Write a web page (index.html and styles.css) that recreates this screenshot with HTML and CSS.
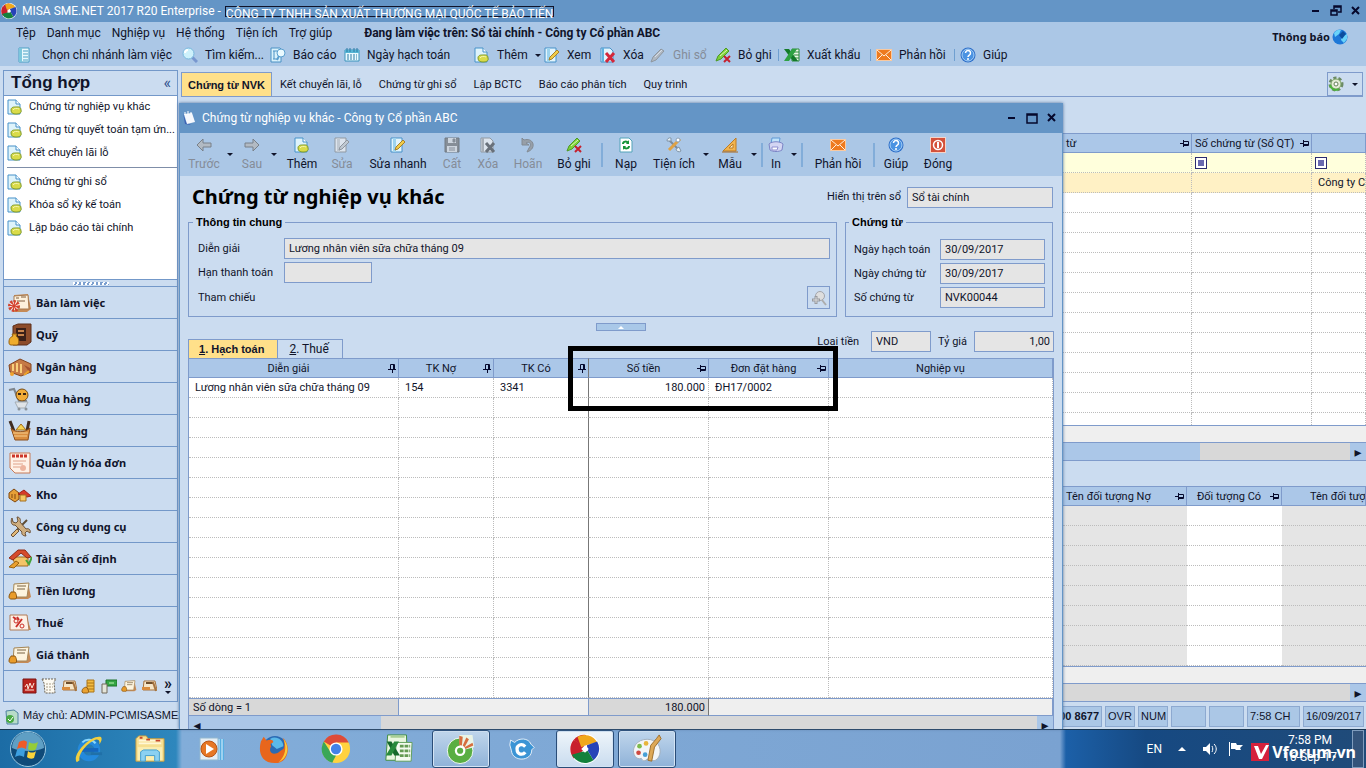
FILE: index.html
```html
<!DOCTYPE html>
<html lang="vi">
<head>
    <meta charset="UTF-8">
    <meta name="viewport" content="width=device-width, initial-scale=1.0">
    <title>MISA SME.NET 2017</title>
    <link rel="stylesheet" href="styles.css">
</head>
<body>
    <!-- icon set -->
    <svg class="defs" aria-hidden="true">
        <symbol id="misa" viewBox="0 0 32 32">
            <circle cx="16" cy="16" r="16" fill="#fff"/>
            <path d="M16 16 4 6A15.500 15.500 0 0 1 17 1z" fill="#c8202c"/><path d="M16 16 4 26A15.500 15.500 0 0 1 4 6L13 12z" fill="#c8202c"/>
            <path d="M12 14 8 3A15.500 15.500 0 0 1 29 9L17 12z" fill="#f0a81c"/>
            <path d="M18 12 29 8A15.500 15.500 0 0 1 25 28L19 18z" fill="#2743b8"/>
            <path d="M19 18 25 28A15.500 15.500 0 0 1 2 22L13 19z" fill="#13813c"/>
            <path d="M16 12l4 4-4 4-4-4z" fill="#fff"/>
        </symbol>
        <symbol id="doc-list" viewBox="0 0 16 16">
            <path d="M3 1h10v14H3z" fill="#e8f8fd" stroke="#4b9fc4"/><path d="M3 1h3v14H3z" fill="#7cc6dc"/><path d="M7 4h5M7 7h5M7 10h5M7 13h5" stroke="#4b9fc4"/>
        </symbol>
        <symbol id="search" viewBox="0 0 16 16">
            <path d="M10 10l5 5" stroke="#7897cf" stroke-width="3"/><circle cx="6.500" cy="6.500" r="5.500" fill="#cdf1fb" stroke="#78b7dd"/><path d="M3 6a3 3 0 0 1 3-3" stroke="#fff" fill="none" stroke-width="2"/>
        </symbol>
        <symbol id="report" viewBox="0 0 16 16">
            <path d="M1 1h9l1 1v13H1z" fill="#d9f1fb" stroke="#4a91c4"/><path d="M3 4h4M4 4v8M3 12h4" stroke="#4a91c4"/><circle cx="11" cy="6" r="4" fill="#eafaff" stroke="#5b9fcf"/><path d="M9 9l-2 4" stroke="#5b9fcf" stroke-width="2"/>
        </symbol>
        <symbol id="calendar" viewBox="0 0 16 16">
            <path d="M1 3h14v11H1z" fill="#e9faff" stroke="#3a93bb"/><path d="M1 3h14v3H1z" fill="#55b5d5"/><path d="M3 1v4M6 1v4M10 1v4M13 1v4" stroke="#2a7ba5"/><path d="M3 8h10M3 10h10M3 12h10" stroke="#2a7ba5" stroke-dasharray="2 1"/>
        </symbol>
        <symbol id="doc-add" viewBox="0 0 16 16">
            <path d="M1 1h8l4 4v10H1z" fill="#def3fb" stroke="#4691c9"/><path d="M9 1v4h4" fill="#fff" stroke="#4691c9"/><path d="M4 11c0-3 3-3 4-3 2 0 6-1 6 3 1 3-2 4-5 4s-5-1-5-4z" fill="#d9db49" stroke="#7f9a2a"/><path d="M6 11c1-2 4-2 6-1" stroke="#f7f6b0" fill="none"/>
        </symbol>
        <symbol id="doc-edit" viewBox="0 0 16 16">
            <path d="M1 1h11v14H1z" fill="#e2f4fc" stroke="#4691c9"/><path d="M3 1h3v14H3z" fill="#9dd3ee"/><path d="M13 3l2 2-7 7-3 1 1-3z" fill="#f1cc49" stroke="#a6802b"/>
        </symbol>
        <symbol id="doc-del" viewBox="0 0 16 16">
            <path d="M1 1h9l3 3v11H1z" fill="#e2f4fc" stroke="#4691c9"/><path d="M2 1h2v14H2z" fill="#5fb2e0"/><path d="M6 6l8 9M14 6l-8 9" stroke="#d3283b" stroke-width="3"/>
        </symbol>
        <symbol id="pen" viewBox="0 0 16 16">
            <path d="M11 2l3 2-8 9-5 2 2-5z" fill="#7cd13a" stroke="#4d9a25"/><path d="M5 10l7-7" stroke="#d8f5a9"/>
        </symbol>
        <symbol id="pen-del" viewBox="0 0 16 16">
            <path d="M11 1l3 3-8 8-5 2 2-5z" fill="#7cd13a" stroke="#4d9a25"/><path d="M5 9l7-6" stroke="#e1f9b5"/><path d="M9 9l6 6M15 9l-6 6" stroke="#c5202e" stroke-width="2"/>
        </symbol>
        <symbol id="excel" viewBox="0 0 16 16">
            <path d="M8 2h7v12H8z" fill="#edf8e9" stroke="#2a8a38"/><path d="M10 5h5M10 8h5M10 11h5" stroke="#2a8a38"/><path d="M0 2h5l9 12H9z" fill="#137a2a"/><path d="M13 2L5 14H0L8 2z" fill="#2ea143"/>
        </symbol>
        <symbol id="mail" viewBox="0 0 16 16">
            <path d="M0 2h16v12H0z" fill="#f9c9a0"/><path d="M1 3h14v10H1z" fill="#ee7a1f"/><path d="M1 3l7 6 7-6M1 13l5-5M15 13l-5-5" stroke="#fff0df" fill="none"/>
        </symbol>
        <symbol id="help" viewBox="0 0 16 16">
            <circle cx="8" cy="8" r="7.500" fill="#2d6fc9"/><circle cx="8" cy="8" r="6" fill="#4b93e2" stroke="#a9d2f8"/><path d="M5.500 6a2.500 2.500 0 1 1 4 2c-1 1-1.500 1-1.500 2M8 11v2" stroke="#fff" stroke-width="1.500" fill="none"/>
        </symbol>
        <symbol id="globe" viewBox="0 0 16 16">
            <circle cx="8" cy="8" r="7.500" fill="#1d78d8"/><path d="M2 4c2-3 5-4 7-3l-2 4-4 3zM10 7l5-2v5l-3 4-3-3z" fill="#69d3fa"/><path d="M7 6l4-4 3 3-4 5z" fill="#0b4d9f"/>
        </symbol>
        <symbol id="gear" viewBox="0 0 16 16">
            <circle cx="8" cy="8" r="6" fill="#dfe8cf" stroke="#6b8a65" stroke-width="3" stroke-dasharray="3 2"/><circle cx="8" cy="8" r="5" fill="#e3ecd7" stroke="#7aa367"/><circle cx="8" cy="8" r="2" fill="#fff" stroke="#637f57"/><path d="M2 9a6 6 0 0 0 9 4" stroke="#4bb33b" stroke-width="2" fill="none"/>
        </symbol>
        <symbol id="left" viewBox="0 0 16 16"><path d="M1 8l6-6v4h8v4H7v4z" fill="#b5b5b5" stroke="#5f6369"/></symbol>
        <symbol id="right" viewBox="0 0 16 16"><path d="M15 8L9 2v4H1v4h8v4z" fill="#b5b5b5" stroke="#5f6369"/></symbol>
        <symbol id="save" viewBox="0 0 16 16"><path d="M1 1h14v14H1z" fill="#77777b" stroke="#5a5a60"/><path d="M4 1h8v5H4zM3 9h10v6H3z" fill="#dcdcdc"/><path d="M9 2h2v3H9zM5 11h6M5 13h6" stroke="#77777b" fill="#77777b"/></symbol>
        <symbol id="undo" viewBox="0 0 16 16"><path d="M2 1v7h7L6 6c4-2 6 1 3 5l-2 4C17 12 14 0 4 3z" fill="#8f8f94" stroke="#6c7078"/></symbol>
        <symbol id="reload" viewBox="0 0 16 16"><path d="M2 1h9l3 3v11H2z" fill="#fff" stroke="#52a3b8"/><path d="M5 7c0-3 4-3 5-1M11 9c0 3-4 3-5 1" stroke="#149238" stroke-width="2" fill="none"/><path d="M11 3v4H8zM5 13V9h3z" fill="#149238"/></symbol>
        <symbol id="tools" viewBox="0 0 16 16"><path d="M2 2l12 12" stroke="#7c8a9a" stroke-width="2"/><path d="M14 2L3 13" stroke="#dfa245" stroke-width="3"/><path d="M1 4a3 3 0 0 1 4-3v3zM10 12a3 3 0 0 0 5 2l-2-4z" fill="#e4eef5" stroke="#8195a8"/><circle cx="12" cy="3" r="2" fill="#fff" stroke="#8aa0b7"/></symbol>
        <symbol id="ruler" viewBox="0 0 16 16"><path d="M1 14L14 1v13z" fill="#f1b44f" stroke="#bd7d25"/><path d="M7 11l4-4v4z" fill="#fff0c9" stroke="#bd7d25"/><path d="M0 15h16" stroke="#a9691e"/></symbol>
        <symbol id="printer" viewBox="0 0 16 16"><path d="M4 1h8l-1 6H3z" fill="#bfe3fb" stroke="#5f98d5"/><path d="M1 7c3-3 11-3 14 0l-1 6c-3 2-9 2-12 0z" fill="#d3d5f3" stroke="#7b84c5"/><path d="M4 10h6l-1 3H4z" fill="#fff" stroke="#8d8fd0"/></symbol>
        <symbol id="power" viewBox="0 0 16 16"><path d="M0 0h16v16H0z" fill="#f4d3c8"/><path d="M1 1h14v14H1z" fill="#d4513a"/><circle cx="8" cy="8" r="4.500" fill="none" stroke="#fff" stroke-width="1.500"/><path d="M8 5v6" stroke="#fff" stroke-width="2"/></symbol>
        <symbol id="notes" viewBox="0 0 16 16"><path d="M2 3l2 11 6 1-5-3z" fill="#3d62b4"/><path d="M3 4l8-1 3 9-8 2z" fill="#f5f8fd"/><path d="M4 5V2M7 5V1M10 4V2" stroke="#fff"/></symbol>
        <symbol id="zoom-add" viewBox="0 0 16 16"><circle cx="9" cy="6" r="4.500" fill="#dedede" stroke="#a3a5ab"/><path d="M11 10l4 5" stroke="#adadad" stroke-width="2"/><path d="M5 6v8M1 10h8" stroke="#989a9f" stroke-width="3"/><path d="M5 7v6M2 10h6" stroke="#dadada"/></symbol>
        <symbol id="pin-v" viewBox="0 0 10 12"><path d="M3.500 7V2.500h4V7M1 7.500h8M5.500 8v3" stroke="#05082c" fill="none"/><path d="M6.500 2v5" stroke="#05082c"/></symbol>
        <symbol id="pin-h" viewBox="0 0 10 12"><path d="M0 6.500h3M3.500 3v7M4 4.500h4.500v4H4" stroke="#05082c" fill="none"/><path d="M4 7.500h5" stroke="#05082c"/></symbol>
        <symbol id="desk" viewBox="0 0 24 20"><path d="M6 2l14-1 3 15-4 3H6z" fill="#c58a56"/><path d="M6 3l14-1 1 14H6z" fill="#fdf1dc" stroke="#a87b51"/><path d="M8 5h3M13 4h5M9 8h8" stroke="#805c3c"/><circle cx="6" cy="13" r="4" fill="#fff" stroke="#d4422c" stroke-width="4" stroke-dasharray="2 1"/><circle cx="6" cy="13" r="2" fill="#d4422c"/></symbol>
        <symbol id="safe" viewBox="0 0 24 22"><path d="M5 2l5-2h13v18l-4 3H5z" fill="#8d4c2a" stroke="#5d2e1a"/><path d="M8 4h10v13H8z" fill="#3b2018"/><path d="M10 7h6M10 11h6" stroke="#c9854c" stroke-width="2"/><path d="M1 18c0-4 2-5 4-6l-1-2h5l-1 2c3 1 4 8 1 9H3c-2 0-2-2-2-3z" fill="#efad2d" stroke="#99620f"/></symbol>
        <symbol id="bank" viewBox="0 0 24 20"><path d="M1 8l11-6 11 5v8l-10 4-11-4z" fill="#c67a45" stroke="#84451f"/><path d="M5 7v7M9 6v9M13 7v9" stroke="#f8cf7b" stroke-width="2"/><path d="M16 8l6 3v5" fill="#a3512d"/><circle cx="4" cy="17" r="2" fill="#f1a32e"/><path d="M16 18l5-4" stroke="#eda329" stroke-width="2"/></symbol>
        <symbol id="cart" viewBox="0 0 24 24"><path d="M1 3l5-1 5 12h8" stroke="#7e858c" stroke-width="2" fill="none"/><circle cx="14" cy="8" r="6" fill="#f0ab37" stroke="#774c16"/><path d="M10 7h3M15 7h3" stroke="#382515" stroke-width="2"/><path d="M7 15h13l-3 6h-7z" fill="#dfe3e7" stroke="#a4adb5"/><circle cx="11" cy="22" r="1.500" fill="#8a929a"/><circle cx="18" cy="22" r="1.500" fill="#8a929a"/></symbol>
        <symbol id="basket" viewBox="0 0 24 24"><path d="M2 2l4 10M21 2l-2 10" stroke="#3f2c21" stroke-width="3"/><path d="M3 9c4 5 14 5 19 0l-2 12H7z" fill="#d98d3f" stroke="#8c4f1c"/><path d="M8 11l5-6 5 6z" fill="#f7d453" stroke="#a36c18"/><path d="M5 14h15M6 17h13" stroke="#f7cf8f"/></symbol>
        <symbol id="invoice" viewBox="0 0 24 24"><path d="M2 2h20v20H7l-5-5z" fill="#fff1e7" stroke="#c77b59"/><path d="M4 5h16" stroke="#cd3529" stroke-width="3" stroke-dasharray="3 1"/><path d="M5 10h13M5 13h10M5 16h7" stroke="#dfa28a"/><circle cx="15" cy="17" r="3" fill="#edb49f"/></symbol>
        <symbol id="stock" viewBox="0 0 24 16"><path d="M1 6l5-4 5 4v6l-4 3-6-4z" fill="#e6a038" stroke="#80470f"/><path d="M4 7v4M7 7v5" stroke="#80470f"/><path d="M10 7l6-4 7 6-4 1z" fill="#d63b2a" stroke="#9c2016"/><path d="M12 8h6v6h-6z" fill="#f5c862" stroke="#a46c1d"/></symbol>
        <symbol id="wrench" viewBox="0 0 24 24"><path d="M4 20L19 5" stroke="#5f4c33" stroke-width="2"/><path d="M3 20l6-6 2 2-6 6z" fill="#e1b878" stroke="#6c5238"/><path d="M4 3l1 4 3 1 2-2-1-4c3 0 4 3 3 5l6 7c3-1 5 1 4 4l-3-2-2 2 1 3c-3 0-5-2-4-4L7 10C4 11 2 7 4 3z" fill="#cfae7f" stroke="#6c5238"/></symbol>
        <symbol id="house" viewBox="0 0 24 20"><path d="M4 8h16v9H8z" fill="#f3c467" stroke="#a06b21"/><path d="M1 9l9-8h7l6 7-4 1-6-5-8 7z" fill="#d64b2d" stroke="#8f2a17"/><path d="M1 18l7-6 3 2-5 5z" fill="#e9a02e" stroke="#99620f"/><path d="M18 11l3 4 3-7" stroke="#45a33a" stroke-width="2" fill="none"/></symbol>
        <symbol id="pay" viewBox="0 0 24 18"><path d="M6 2l14-1 3 14-3 2H6z" fill="#c58a56"/><path d="M6 2l15-1-2 14H5z" fill="#fdf4de" stroke="#a48758"/><path d="M9 4h9M9 7h8" stroke="#786343"/><path d="M1 15c0-3 2-4 2-5h4c1 1 3 7 0 7H3c-1 0-2-1-2-2z" fill="#e99c2a" stroke="#8c5711"/></symbol>
        <symbol id="tax" viewBox="0 0 24 18"><path d="M18 1l5 15h-4z" fill="#c58a56"/><path d="M2 1h17l2 15H2z" fill="#fdf1e7" stroke="#b17a55"/><path d="M5 3l3 2M9 3l2 3M8 13l6-8" stroke="#cb2f28" stroke-width="2"/><circle cx="8" cy="7" r="2" fill="none" stroke="#cb2f28"/><circle cx="14" cy="12" r="2" fill="none" stroke="#cb2f28"/></symbol>
        <symbol id="book" viewBox="0 0 16 16"><path d="M2 1h13v14H2z" fill="#b9251f" stroke="#7c1512"/><path d="M4 9l2-3 1 5 2-6 2 5 2-5M4 12h9" stroke="#fbe3d6" fill="none"/></symbol>
        <symbol id="sheet" viewBox="0 0 16 16"><path d="M1 1h14l-2 3 1 11H4L3 5z" fill="#fcfaf2" stroke="#6b6354" stroke-dasharray="2 1"/><path d="M5 6h7M5 9h7M5 12h6" stroke="#a79c86" stroke-dasharray="2 1"/></symbol>
        <symbol id="board" viewBox="0 0 16 12"><path d="M3 1h11l2 9H2z" fill="#f6e6c8" stroke="#a5733f"/><path d="M5 3h8" stroke="#6e4e2c" stroke-width="2"/><path d="M1 7h8v3H1z" fill="#d98b3c"/><path d="M12 2l3 9" stroke="#a5733f" stroke-width="2"/></symbol>
        <symbol id="coins" viewBox="0 0 16 16"><path d="M6 2h7v12H6z" fill="#f3bb41" stroke="#aa751b"/><path d="M6 5h7M6 8h7M6 11h7" stroke="#aa751b"/><path d="M1 14c0-4 2-4 4-5 2 1 4 6 1 6H2z" fill="#eaa232" stroke="#965e12"/></symbol>
        <symbol id="palm" viewBox="0 0 16 16"><path d="M5 2h11v6H5z" fill="#34a543" stroke="#1d7228"/><path d="M1 6h5v9H1z" fill="#e5e5da" stroke="#71695a"/><path d="M8 5h5" stroke="#bdf1b6"/></symbol>
        <symbol id="db" viewBox="0 0 16 16"><path d="M2 2l8-1 4 3v11H3z" fill="#b8dcc9" stroke="#4e83a0"/><circle cx="6" cy="10" r="4" fill="#48a944"/><path d="M4 10l2 2 3-4" stroke="#fff" fill="none"/></symbol>

        <symbol id="orb" viewBox="0 0 36 36"><circle cx="18" cy="18" r="17.500" fill="#0f4a79" stroke="#9cc8e0"/><path d="M2 17a16 16 0 0 1 32 0c-8 4-24 4-32 0z" fill="#5f9fc4"/><path d="M9 11c3-2 6-2 8 0l-1 7c-3-2-6-2-9 0z" fill="#ee5b27"/><path d="M19 11c3 2 6 2 9 0l-2 7c-2 2-6 2-8 0z" fill="#95cc39"/><path d="M7 19c3-2 6-2 8 0l-1 7c-3-2-6-2-9 0z" fill="#3d9fe0"/><path d="M18 20c2 2 6 2 8 0l-2 7c-2 1-5 1-7-1z" fill="#fbd33b"/></symbol>
        <symbol id="ie" viewBox="0 0 32 32"><circle cx="17" cy="17" r="9" fill="none" stroke="#2489dc" stroke-width="6"/><path d="M8 17h19" stroke="#1666bb" stroke-width="4"/><path d="M19 21h12" stroke="#2070a8" stroke-width="3"/><path d="M10 9a9 9 0 0 1 14 1" stroke="#8ad8fb" stroke-width="2" fill="none"/><path d="M4 30C-2 22 19 1 29 3c3 1 1 6-1 8 1-4-1-6-4-5C15 9 5 22 7 28z" fill="#f2cf3e"/></symbol>
        <symbol id="folder" viewBox="0 0 32 28"><path d="M1 3l3-3h8l2 3h17v24H1z" fill="#f6df90" stroke="#c59d3e"/><path d="M4 5h24M4 8h24" stroke="#fff7d6" stroke-width="2"/><path d="M5 2h3M12 4h4M22 5h5" stroke="#c6462b" stroke-width="2"/><path d="M3 12h26v14H3z" fill="#fbeeb2"/><path d="M6 27V17l3-2h14l3 2v10h-5v-6H11v6z" fill="#8bd1f2" stroke="#3e9ccf"/></symbol>
        <symbol id="wmp" viewBox="0 0 26 24"><path d="M18 2h7v21h-7z" fill="#58aee1"/><path d="M20 2v21M23 2v21" stroke="#e3f5ff"/><path d="M1 1h18v22H1z" fill="#e6eef4" stroke="#92b7cf"/><circle cx="10" cy="12" r="8" fill="#e67725" stroke="#b75417"/><path d="M7 7l8 5-8 5z" fill="#fff"/></symbol>
        <symbol id="firefox" viewBox="0 0 32 32"><circle cx="17" cy="15" r="13" fill="#2b6bb4"/><path d="M12 5c7-4 14 2 14 8l-7 3-5-4z" fill="#5bb9e8"/><path d="M2 8l3-5 3 4c5-2 8 0 7 2-3 1-3 2-2 4-2 3-2 7 3 8 5 0 6-3 10-5 0 0 3-6-1-12 9 6 8 27-8 27C2 31-1 19 2 8z" fill="#e8661c"/><path d="M26 5c8 9 4 22-5 25 7-6 9-16 5-25z" fill="#fbca38"/></symbol>
        <symbol id="chrome" viewBox="0 0 32 32"><circle cx="16" cy="16" r="15" fill="#ffd23f"/><path d="M16 16L3 8a15 15 0 0 1 26.500 1H16z" fill="#dd4b39"/><path d="M16 16l-4 14.500A15 15 0 0 1 3 8l7 11z" fill="#3aa757"/><path d="M10 19l6 4-4 7.500A15 15 0 0 1 5 26z" fill="#3aa757"/><circle cx="16" cy="16" r="7" fill="#fff"/><circle cx="16" cy="16" r="5.500" fill="#4382e8"/></symbol>
        <symbol id="excel-big" viewBox="0 0 32 32"><path d="M5 1h20l1 27H3z" fill="#e9f6df" stroke="#3c8c3a"/><path d="M8 3h15" stroke="#a7ce93" stroke-width="2"/><path d="M14 9h17l-1 20H13z" fill="#f4fbf0" stroke="#5c9c56"/><path d="M18 13h11M18 18h11M18 23h11" stroke="#649b53" stroke-width="3" stroke-dasharray="4 1"/><path d="M4 8h5l9 15h-6z" fill="#15692a"/><path d="M17 8l-8 15H3L12 8z" fill="#288a3b"/></symbol>
        <symbol id="coccoc" viewBox="0 0 34 34"><circle cx="16" cy="19" r="14.500" fill="#59ae43" stroke="#fff"/><path d="M16 19L15 1h15l2 14z" fill="#eaf4e6"/><path d="M15 2l4 1-1 10h-3zM23 4l3 2-5 9-2-2zM30 10l1 3-9 4-1-2z" fill="#d66e3f"/><circle cx="16" cy="19" r="6" fill="#fff"/><circle cx="16" cy="19" r="3.500" fill="#59ae43"/></symbol>
        <symbol id="cbird" viewBox="0 0 32 28"><path d="M2 3l5 3c5-6 17-6 20 2l4 4-3 3c0 15-24 15-25 1L1 9z" fill="#3b94d5" stroke="#fff"/><path d="M20 11c-5-5-11-1-10 4 0 6 7 7 10 3" stroke="#fff" stroke-width="4" fill="none"/></symbol>
        <symbol id="paint" viewBox="0 0 32 30"><path d="M2 14C5 4 19 2 26 8c6 5 5 16-1 19-4 2-5-3-9-1-3 3-5 1-6-1-5 2-10-4-8-11z" fill="#f2f5f8" stroke="#a2afbc"/><circle cx="8" cy="12" r="2.500" fill="#7dbb4c"/><circle cx="7" cy="19" r="2.500" fill="#cf4940"/><circle cx="15" cy="9" r="2.500" fill="#e7b53c"/><circle cx="14" cy="21" r="2.500" fill="#469fd6"/><path d="M29 0l2 4-7 9-3 15-4-1 3-16 6-7z" fill="#dda857" stroke="#9c6d2b"/></symbol>
        <symbol id="speaker" viewBox="0 0 16 14"><path d="M1 5h3l4-4v12l-4-4H1z" fill="#fff"/><path d="M10 4c1 2 1 4 0 6M12 2c3 3 3 7 0 10" stroke="#fff" fill="none"/></symbol>
        <symbol id="flag" viewBox="0 0 16 14"><path d="M1.500 0v14" stroke="#fff"/><path d="M3 1h5l1 2h6l-3 3 1 2H8L7 7H3z" fill="#fff"/></symbol>
    </svg>

    <div class="desktop">
        <div class="app">
            <header class="titlebar">
                <svg class="i16"><use href="#misa"/></svg>
                <span>MISA SME.NET 2017 R20 Enterprise -</span>
                <span class="company">CÔNG TY TNHH SẢN XUẤT THƯƠNG MẠI QUỐC TẾ BẢO TIẾN</span>
                <div class="winbtns">
                    <button aria-label="Minimize"><svg viewBox="0 0 12 12"><path d="M2 6h7" stroke="#05082c" stroke-width="2"/></svg></button>
                    <button aria-label="Restore"><svg viewBox="0 0 12 12"><path d="M4 4V1h7v6H8M1 5h6v5H1zM1 6h6M4 2h7" stroke="#05082c" fill="none" stroke-width="1.500"/></svg></button>
                    <button aria-label="Close"><svg viewBox="0 0 12 12"><path d="M2 2l7 7M9 2L2 9" stroke="#05082c" stroke-width="2"/></svg></button>
                </div>
            </header>

            <div class="bars">
                <nav class="menu">
                    <a href="#">Tệp</a><a href="#">Danh mục</a><a href="#">Nghiệp vụ</a><a href="#">Hệ thống</a><a href="#">Tiện ích</a><a href="#">Trợ giúp</a>
                    <b>Đang làm việc trên: Sổ tài chính - Công ty Cổ phần ABC</b>
                </nav>
                <div class="tools">
                    <button class="t-branch"><svg class="i16"><use href="#doc-list"/></svg>Chọn chi nhánh làm việc</button>
                    <button class="t-find"><svg class="i16"><use href="#search"/></svg>Tìm kiếm...</button>
                    <button class="t-report"><svg class="i16"><use href="#report"/></svg>Báo cáo</button>
                    <button class="t-date"><svg class="i16"><use href="#calendar"/></svg>Ngày hạch toán</button>
                    <button class="t-add"><svg class="i16"><use href="#doc-add"/></svg>Thêm<i class="down"></i></button>
                    <button class="t-view"><svg class="i16"><use href="#doc-edit"/></svg>Xem</button>
                    <button class="t-del"><svg class="i16"><use href="#doc-del"/></svg>Xóa</button>
                    <button class="t-post" disabled><svg class="i16"><use href="#pen"/></svg>Ghi sổ</button>
                    <button class="t-unpost"><svg class="i16"><use href="#pen-del"/></svg>Bỏ ghi</button>
                    <button class="t-export sep"><svg class="i16"><use href="#excel"/></svg>Xuất khẩu</button>
                    <button class="t-mail sep"><svg class="i16"><use href="#mail"/></svg>Phản hồi</button>
                    <button class="t-help sep"><svg class="i16"><use href="#help"/></svg>Giúp</button>
                </div>
                <a class="notice" href="#">Thông báo<svg class="i16"><use href="#globe"/></svg></a>
            </div>

            <div class="body">
                <aside class="side">
                    <div class="side-head"><h2>Tổng hợp</h2><span>«</span></div>
                    <ul class="links">
                        <li><a href="#"><svg class="i16"><use href="#doc-add"/></svg>Chứng từ nghiệp vụ khác</a></li>
                        <li><a href="#"><svg class="i16"><use href="#doc-add"/></svg>Chứng từ quyết toán tạm ứn...</a></li>
                        <li><a href="#"><svg class="i16"><use href="#doc-add"/></svg>Kết chuyển lãi lỗ</a></li>
                        <li class="split"><a href="#"><svg class="i16"><use href="#doc-add"/></svg>Chứng từ ghi sổ</a></li>
                        <li><a href="#"><svg class="i16"><use href="#doc-add"/></svg>Khóa sổ kỳ kế toán</a></li>
                        <li><a href="#"><svg class="i16"><use href="#doc-add"/></svg>Lập báo cáo tài chính</a></li>
                    </ul>
                    <div class="grip"></div>
                    <nav class="modules">
                        <a href="#"><svg><use href="#desk"/></svg>Bàn làm việc</a>
                        <a href="#"><svg><use href="#safe"/></svg>Quỹ</a>
                        <a href="#"><svg><use href="#bank"/></svg>Ngân hàng</a>
                        <a href="#"><svg><use href="#cart"/></svg>Mua hàng</a>
                        <a href="#"><svg><use href="#basket"/></svg>Bán hàng</a>
                        <a href="#"><svg><use href="#invoice"/></svg>Quản lý hóa đơn</a>
                        <a href="#"><svg><use href="#stock"/></svg>Kho</a>
                        <a href="#"><svg><use href="#wrench"/></svg>Công cụ dụng cụ</a>
                        <a href="#"><svg><use href="#house"/></svg>Tài sản cố định</a>
                        <a href="#"><svg><use href="#pay"/></svg>Tiền lương</a>
                        <a href="#"><svg><use href="#tax"/></svg>Thuế</a>
                        <a href="#"><svg><use href="#pay"/></svg>Giá thành</a>
                    </nav>
                    <div class="more">
                        <svg class="i16"><use href="#book"/></svg><svg class="i16"><use href="#sheet"/></svg><svg class="i16"><use href="#board"/></svg><svg class="i16"><use href="#coins"/></svg><svg class="i16"><use href="#palm"/></svg><svg class="i16"><use href="#pay"/></svg><svg class="i16"><use href="#board"/></svg>
                        <span class="chev">»<i class="down"></i></span>
                    </div>
                </aside>

                <main class="work">
                    <nav class="tabs">
                        <a class="on" href="#">Chứng từ NVK</a><a href="#">Kết chuyển lãi, lỗ</a><a href="#">Chứng từ ghi sổ</a><a href="#">Lập BCTC</a><a href="#">Báo cáo phân tích</a><a href="#">Quy trình</a>
                        <button class="gearbtn" aria-label="Tùy chọn"><svg class="i16"><use href="#gear"/></svg><i class="down"></i></button>
                    </nav>
                    <div class="list">
                        <table class="grid" id="vouchers">
                            <colgroup><col><col class="c128"><col class="c120"><col class="c54"></colgroup>
                            <thead><tr><th></th><th class="first">từ<svg class="pin"><use href="#pin-h"/></svg></th><th class="first">Số chứng từ (Sổ QT)<svg class="pin"><use href="#pin-h"/></svg></th><th></th></tr></thead>
                            <tbody>
                                <tr class="filter"><td></td><td></td><td><i class="op"></i></td><td><i class="op"></i></td></tr>
                                <tr class="picked"><td></td><td></td><td></td><td>Công ty Cổ</td></tr>
                            </tbody>
                        </table>
                    </div>
                    <div class="foot"></div>
                    <div class="scroll wide"><i class="thumb"></i><button aria-label="Cuộn phải">▸</button></div>
                    <div class="list detail">
                        <table class="grid" id="details">
                            <colgroup><col><col class="c124"><col class="c95"><col class="c84"></colgroup>
                            <thead><tr><th></th><th class="first">Tên đối tượng Nợ<svg class="pin"><use href="#pin-h"/></svg></th><th>Đối tượng Có<svg class="pin"><use href="#pin-h"/></svg></th><th class="cut">Tên đối tượng</th></tr></thead>
                            <tbody></tbody>
                        </table>
                    </div>
                    <div class="foot"></div>
                    <div class="scroll end"><button aria-label="Cuộn phải">▸</button></div>
                </main>
            </div>

            <footer class="status">
                <svg class="i16"><use href="#db"/></svg>
                <span class="server">Máy chủ: ADMIN-PC\MISASME2</span>
                <b class="phone">00 8677</b>
                <span class="s30">OVR</span><span class="s30">NUM</span><span class="s36"></span><span class="s36"></span><span class="s54">7:58 CH</span><span class="s62">16/09/2017</span>
            </footer>
        </div>

        <section class="dialog">
            <header class="titlebar">
                <svg class="i16"><use href="#notes"/></svg>
                <span>Chứng từ nghiệp vụ khác - Công ty Cổ phần ABC</span>
                <div class="winbtns">
                    <button aria-label="Minimize"><svg viewBox="0 0 12 12"><path d="M2 6h7" stroke="#05082c" stroke-width="2"/></svg></button>
                    <button aria-label="Maximize"><svg viewBox="0 0 12 12"><path d="M1 2h10v9H1zM1 3h10" stroke="#05082c" fill="none" stroke-width="1.500"/></svg></button>
                    <button aria-label="Close"><svg viewBox="0 0 12 12"><path d="M2 2l7 7M9 2L2 9" stroke="#05082c" stroke-width="2"/></svg></button>
                </div>
            </header>
            <div class="dlg-tools">
                <button class="w40" disabled><svg class="i16"><use href="#left"/></svg>Trước</button><i class="down"></i>
                <button class="w32" disabled><svg class="i16"><use href="#right"/></svg>Sau</button><i class="down"></i>
                <button class="w44"><svg class="i16"><use href="#doc-add"/></svg>Thêm</button>
                <button class="w36" disabled><svg class="i16"><use href="#doc-edit"/></svg>Sửa</button>
                <button class="w76"><svg class="i16"><use href="#doc-edit"/></svg>Sửa nhanh</button>
                <button class="w32" disabled><svg class="i16"><use href="#save"/></svg>Cất</button>
                <button class="w40" disabled><svg class="i16"><use href="#doc-del"/></svg>Xóa</button>
                <button class="w40" disabled><svg class="i16"><use href="#undo"/></svg>Hoãn</button>
                <button class="w52"><svg class="i16"><use href="#pen-del"/></svg>Bỏ ghi</button><span class="bar"></span>
                <button class="w44"><svg class="i16"><use href="#reload"/></svg>Nạp</button>
                <button class="w52"><svg class="i16"><use href="#tools"/></svg>Tiện ích</button><i class="down"></i>
                <button class="w36"><svg class="i16"><use href="#ruler"/></svg>Mẫu</button><i class="down"></i><span class="bar"></span>
                <button class="w24"><svg class="i16"><use href="#printer"/></svg>In</button><i class="down"></i><span class="bar"></span>
                <button class="w68"><svg class="i16"><use href="#mail"/></svg>Phản hồi</button><span class="bar"></span>
                <button class="w40"><svg class="i16"><use href="#help"/></svg>Giúp</button>
                <button class="w44"><svg class="i16"><use href="#power"/></svg>Đóng</button>
            </div>

            <form class="form">
                <div class="form-head">
                    <h1>Chứng từ nghiệp vụ khác</h1>
                    <label for="book-view">Hiển thị trên sổ</label>
                    <input id="book-view" class="in146" value="Sổ tài chính" readonly>
                </div>
                <div class="groups">
                    <fieldset class="general">
                        <legend>Thông tin chung</legend>
                        <label for="desc">Diễn giải</label><input id="desc" value="Lương nhân viên sữa chữa tháng 09" readonly>
                        <label for="due">Hạn thanh toán</label><input id="due" class="in88" value="" readonly>
                        <label for="ref">Tham chiếu</label><button type="button" id="ref" class="refbtn"><svg class="i16"><use href="#zoom-add"/></svg></button>
                    </fieldset>
                    <fieldset class="voucher">
                        <legend>Chứng từ</legend>
                        <label for="d1">Ngày hạch toán</label><input id="d1" value="30/09/2017" readonly>
                        <label for="d2">Ngày chứng từ</label><input id="d2" value="30/09/2017" readonly>
                        <label for="no">Số chứng từ</label><input id="no" value="NVK00044" readonly>
                    </fieldset>
                </div>
                <button type="button" class="handle" aria-label="Thu gọn"><i></i></button>
                <div class="switch">
                    <a class="on" href="#"><u>1</u>. Hạch toán</a><a href="#"><u>2</u>. Thuế</a>
                    <div class="money">
                        <label for="cur">Loại tiền</label><input id="cur" class="in60" value="VND" readonly>
                        <label for="rate">Tỷ giá</label><input id="rate" class="in80 num" value="1,00" readonly>
                    </div>
                </div>
                <div class="entries">
                    <table class="grid" id="entries">
                        <colgroup><col class="c210"><col class="c95"><col class="c95"><col class="c120"><col class="c120"><col></colgroup>
                        <thead><tr><th>Diễn giải<svg class="pin"><use href="#pin-v"/></svg></th><th>TK Nợ<svg class="pin"><use href="#pin-v"/></svg></th><th>TK Có<svg class="pin"><use href="#pin-v"/></svg></th><th>Số tiền<svg class="pin"><use href="#pin-h"/></svg></th><th>Đơn đặt hàng<svg class="pin"><use href="#pin-h"/></svg></th><th>Nghiệp vụ</th></tr></thead>
                        <tbody>
                            <tr><td>Lương nhân viên sữa chữa tháng 09</td><td>154</td><td>3341</td><td class="num">180.000</td><td>ĐH17/0002</td><td></td></tr>
                        </tbody>
                        <tfoot><tr><td class="sum">Số dòng = 1</td><td colspan="2"></td><td class="sum num">180.000</td><td colspan="2"></td></tr></tfoot>
                    </table>
                    <div class="scroll"><button type="button" aria-label="Cuộn trái">◂</button><i class="thumb"></i><button type="button" aria-label="Cuộn phải">▸</button></div>
                    <div class="mark"></div>
                </div>
            </form>
        </section>

        <div class="taskbar">
            <button aria-label="Start"><svg class="orb"><use href="#orb"/></svg></button>
            <button aria-label="Internet Explorer"><svg><use href="#ie"/></svg></button>
            <button aria-label="Explorer"><svg><use href="#folder"/></svg></button>
            <button aria-label="Media Player"><svg class="small"><use href="#wmp"/></svg></button>
            <button aria-label="Firefox"><svg><use href="#firefox"/></svg></button>
            <button aria-label="Chrome"><svg><use href="#chrome"/></svg></button>
            <button aria-label="Excel"><svg><use href="#excel-big"/></svg></button>
            <button class="open" aria-label="Cốc Cốc"><svg><use href="#coccoc"/></svg></button>
            <button aria-label="C"><svg class="small"><use href="#cbird"/></svg></button>
            <button class="open active" aria-label="MISA"><svg><use href="#misa"/></svg></button>
            <button class="open" aria-label="Paint"><svg><use href="#paint"/></svg></button>
            <div class="tray">
                <span>EN</span><i class="up"></i><svg class="i16"><use href="#speaker"/></svg><svg class="i16"><use href="#flag"/></svg>
                <div class="clock">7:58 PM<br>16-Sep-17</div>
                <div class="peek"></div>
                <div class="forum"><svg viewBox="0 0 18 18"><path d="M0 0h18v18H0z" fill="#d5213c"/><path d="M3 3h4l3 8 5-9h3L11 16H8z" fill="#fff"/></svg>Vforum.vn</div>
            </div>
        </div>
    </div>

    <script>
        // fill the grids with blank rows
        function addRows(id, count, cols) {
            let body = document.querySelector('#' + id + ' tbody');
            for (let i = 0; i < count; i++) {
                let row = body.insertRow();
                for (let c = 0; c < cols; c++) {
                    row.insertCell();
                }
            }
        }
        addRows('vouchers', 40, 4);
        addRows('details', 8, 4);
        addRows('entries', 15, 6);
    </script>
</body>
</html>
```
FILE: styles.css
```css
* {
    box-sizing: border-box;
}
body {
    margin: 0;
    font-family: Roboto, "Liberation Sans", sans-serif;
    font-size: 11px;
    line-height: 16px;
    color: #10142a;
    overflow: hidden;
}
a {
    color: inherit;
    text-decoration: none;
}
button {
    font: inherit;
    color: inherit;
    background: none;
    border: none;
    padding: 0;
}
.defs {
    display: none;
}
.i16 {
    width: 16px;
    height: 16px;
    flex: none;
}
.down {
    width: 0;
    height: 0;
    flex: none;
    border: 3px solid transparent;
    border-top-color: #10142a;
    border-bottom: none;
}
.desktop {
    position: relative;
    height: 100vh;
    display: flex;
    flex-direction: column;
}
.app {
    flex: 1;
    min-height: 0;
    display: flex;
    flex-direction: column;
    background: #cbdcf0;
}

/* title bars */
.titlebar {
    flex: none;
    height: 22px;
    display: flex;
    align-items: center;
    gap: 4px;
    padding: 0 4px 0 1px;
    background: #6495c6;
    color: #fff;
    font-size: 12px;
}
.titlebar .i16 {
    margin-right: 1px;
}
.company {
    height: 11px;
    line-height: 14px;
    border: 1px solid #10142a;
}
.winbtns {
    margin-left: auto;
    display: flex;
    gap: 8px;
}
.winbtns button, .winbtns svg {
    width: 12px;
    height: 12px;
    display: block;
}

/* menu and toolbar */
.bars {
    flex: none;
    position: relative;
    height: 44px;
    padding-left: 16px;
    background: #abc7e6;
    font-size: 12px;
}
.menu {
    display: flex;
    gap: 11px;
    height: 22px;
    align-items: center;
}
.menu b {
    margin-left: 21px;
}
.tools {
    display: flex;
    height: 22px;
}
.tools button {
    display: flex;
    align-items: center;
    gap: 7px;
    flex: none;
    white-space: nowrap;
}
.tools .t-branch { width: 166px; gap: 10px; }
.tools .t-find { width: 88px; }
.tools .t-report { width: 74px; }
.tools .t-date { width: 130px; }
.tools .t-add { width: 70px; }
.tools .t-view { width: 56px; }
.tools .t-del { width: 50px; }
.tools .t-post { width: 65px; }
.tools .t-unpost { width: 70px; }
.tools .t-export { width: 92px; }
.tools .t-mail { width: 84px; }
.tools .sep::before {
    content: "";
    width: 1px;
    height: 12px;
    margin-left: -7px;
    margin-right: -2px;
    background: #6f9fd0;
}
button:disabled {
    color: #858c98;
}
button:disabled svg {
    filter: grayscale(1);
    opacity: .7;
}
.notice {
    position: absolute;
    right: 18px;
    top: 7px;
    display: flex;
    gap: 2px;
    font: bold 11px/16px "Noto Sans", sans-serif;
}

/* left pane */
.body {
    flex: 1;
    min-height: 0;
    display: flex;
    padding-left: 3px;
}
.side {
    width: 175px;
    flex: none;
    display: flex;
    flex-direction: column;
    margin: 4px 3px 0 0;
    border: 1px solid #7398c9;
}
.side-head {
    display: flex;
    height: 25px;
    align-items: center;
    justify-content: space-between;
    padding: 0 6px 0 7px;
    border-bottom: 1px solid #7398c9;
}
.side-head h2 {
    margin: 0;
    font: bold 17px "Liberation Sans", sans-serif;
}
.side-head span {
    font-size: 16px;
    color: #2c4f8c;
}
.links {
    flex: 1;
    margin: 0;
    padding: 0 0 0 3px;
    list-style: none;
    background: #fff;
    overflow: hidden;
}
.links a {
    display: flex;
    align-items: center;
    gap: 6px;
    height: 23px;
    padding-bottom: 2px;
    white-space: nowrap;
}
.links .split {
    margin-top: 2px;
    padding-top: 3px;
    border-top: 1px solid #7f8ea8;
}
.grip {
    height: 7px;
    border-top: 1px solid #7398c9;
    background: repeating-linear-gradient(110deg, #fff 0 2px, #7b9fcf 2px 4px) center / 36px 3px no-repeat;
}
.modules a {
    display: flex;
    align-items: center;
    gap: 4px;
    height: 32px;
    padding-left: 4px;
    border-top: 1px solid #7398c9;
    font-family: "Noto Sans", sans-serif;
    font-weight: bold;
}
.modules svg {
    width: 24px;
    height: 24px;
}
.more {
    height: 31px;
    display: flex;
    align-items: center;
    gap: 4px;
    padding-left: 17px;
    border-top: 1px solid #7398c9;
}
.chev {
    display: flex;
    flex-direction: column;
    align-items: center;
    gap: 2px;
    font-size: 16px;
    line-height: 10px;
    font-weight: bold;
    margin-left: 3px;
}

/* work area behind the dialog */
.work {
    flex: 1;
    min-width: 0;
    display: flex;
    flex-direction: column;
}
.tabs {
    display: flex;
    flex: none;
    height: 25px;
    margin: 6px 3px 36px 0;
    border-bottom: 1px solid #7f9bcb;
}
.tabs a {
    padding: 5px 9px 3px 8px;
}
.tabs .on {
    padding: 4px 6px;
    border: 1px solid #7f9bcb;
    border-bottom: none;
    background: #ffe08a;
    font-family: "Liberation Sans", sans-serif;
    font-weight: bold;
}
.gearbtn {
    margin-left: auto;
    display: flex;
    align-items: center;
    gap: 8px;
    width: 36px;
    border: 1px solid #7f9bcb;
}
.list {
    flex: 1;
    min-height: 0;
    overflow: hidden;
}
.list.detail {
    flex: none;
    margin-top: 25px;
}
.grid {
    width: 100%;
    table-layout: fixed;
    border-spacing: 0;
    background: #fff;
}
.grid th {
    height: 20px;
    padding: 1px 1px 0;
    background: #abc7e8;
    border: 1px solid #7f9bcb;
    border-left: none;
    font-weight: normal;
    white-space: nowrap;
    overflow: hidden;
}
.grid .first {
    text-align: left;
    padding-left: 3px;
}
.grid .cut {
    text-align: left;
    padding-left: 28px;
}
.grid td {
    height: 20px;
    padding: 1px 6px 0;
    border: 1px dotted #bcbcbc;
    border-width: 0 1px 1px 0;
    white-space: nowrap;
    overflow: hidden;
    line-height: 18px;
}
.pin {
    float: right;
    width: 10px;
    height: 12px;
    margin-top: 1px;
}
.c54 { width: 54px; }
.c84 { width: 84px; }
.c95 { width: 95px; }
.c120 { width: 120px; }
.c124 { width: 124px; }
.c128 { width: 129px; }
.c210 { width: 210px; }
.filter td {
    background: #ffffdc;
}
.picked td {
    background: #fff1c5;
}
.op {
    display: block;
    width: 12px;
    height: 12px;
    margin-left: -3px;
    border: 1px solid #2c2c70;
    background: #6868ae content-box;
    padding: 2px;
    outline: 2px solid #fff;
    outline-offset: -3px;
}
#details td {
    background: #e5e5e5;
    border-right: none;
}
#details td:nth-child(3) {
    background: #fff;
}
.foot {
    flex: none;
    height: 17px;
    background: #efefef;
    border-top: 1px solid #7f9bcb;
}
.scroll {
    flex: none;
    display: flex;
    justify-content: space-between;
    height: 19px;
    background: #d8d8d8;
    border: 1px solid #7f9bcb;
    border-width: 1px 0;
}
.scroll button {
    width: 16px;
    background: #abc7e8;
    font: 14px/16px "DejaVu Sans", sans-serif;
}
.scroll .thumb {
    background: #abc7e8;
}
.wide .thumb {
    width: 86%;
}
.end {
    justify-content: flex-end;
}
.status {
    flex: none;
    display: flex;
    align-items: center;
    gap: 3px;
    height: 27px;
    padding: 3px 2px 1px 4px;
    font-family: "Liberation Sans", sans-serif;
}
.status span, .status .phone {
    height: 21px;
    line-height: 19px;
    padding: 0 2px;
    border: 1px solid #8da9d0;
    background: #abc7e6;
    white-space: nowrap;
}
.status .server {
    border: none;
    background: none;
    padding: 0;
}
.status .phone {
    flex: 1;
    text-align: right;
}
.status .s30 { width: 30px; }
.status .s36 { width: 35px; }
.status .s54 { width: 53px; }
.status .s62 { width: 61px; }

/* voucher dialog */
.dialog {
    position: absolute;
    left: 179px;
    right: 303px;
    top: 103px;
    bottom: 39px;
    display: flex;
    flex-direction: column;
    background: #cbdcf0;
    border: 1px solid #6495c6;
    border-width: 0 1px;
    box-shadow: 0 0 3px #52719b;
    overflow: hidden;
}
.dialog .titlebar {
    height: 30px;
    padding: 0 4px 0 1px;
}
.dlg-tools {
    flex: none;
    display: flex;
    align-items: center;
    height: 43px;
    padding-left: 4px;
    background: #abc7e6;
    font-size: 12px;
}
.dlg-tools button {
    display: flex;
    flex: none;
    flex-direction: column;
    align-items: center;
    gap: 3px;
    white-space: nowrap;
}
.dlg-tools .down {
    margin: 0 3px;
}
.dlg-tools .bar {
    width: 2px;
    height: 24px;
    margin: 0 1px;
    background: #82add9;
}
.w24 { width: 24px; }
.w32 { width: 32px; }
.w36 { width: 36px; }
.w40 { width: 40px; }
.w44 { width: 44px; }
.w52 { width: 52px; }
.w68 { width: 68px; }
.w76 { width: 76px; }
.form {
    flex: 1;
    min-height: 0;
    display: flex;
    flex-direction: column;
    padding: 0 8px;
}
.form input {
    height: 21px;
    width: 100%;
    padding: 0 4px;
    border: 1px solid #7f9bcb;
    background: #e5e5e5;
    font: inherit;
    color: inherit;
    outline: none;
}
.form .in60 { width: 60px; }
.form .in80 { width: 80px; }
.form .in88 { width: 88px; }
.form .in146 { width: 146px; }
.form .num, .grid .num {
    text-align: right;
    padding-right: 3px;
}
.form-head {
    display: flex;
    align-items: center;
    gap: 6px;
    height: 38px;
    flex: none;
    padding: 4px 1px 0 4px;
}
.form-head h1 {
    flex: 1;
    margin: 0 0 2px;
    font: bold 20px "Noto Sans", sans-serif;
    color: #000;
}
.groups {
    flex: none;
    display: flex;
    gap: 8px;
    height: 103px;
    padding-right: 1px;
}
fieldset {
    margin: 0;
    border: 1px solid #7f9bcb;
    display: grid;
    align-content: start;
    align-items: center;
    row-gap: 3px;
}
legend {
    padding: 0 3px;
    font-family: "Liberation Sans", sans-serif;
    font-weight: bold;
    color: #000;
}
.general {
    flex: 1;
    grid-template-columns: 86px 1fr;
    padding: 8px 6px 0 9px;
}
.general legend, .voucher legend {
    margin-left: -5px;
}
.voucher {
    width: 208px;
    grid-template-columns: 86px 1fr;
    padding: 9px 7px 0 8px;
}
.refbtn {
    justify-self: end;
    width: 23px;
    height: 23px;
    padding: 3px;
    border: 1px solid #7f9bcb;
}
.refbtn svg {
    display: block;
}
.handle {
    flex: none;
    align-self: center;
    width: 50px;
    height: 8px;
    margin-top: 6px;
    border: 1px solid #7f9bcb;
    background: #a9c8e8;
}
.handle i {
    display: block;
    width: 6px;
    margin: 0 auto;
    border: 3px solid transparent;
    border-bottom-color: #fff;
    border-top: none;
}
.switch {
    flex: none;
    display: flex;
    align-items: flex-end;
    height: 27px;
}
.switch a {
    height: 19px;
    padding: 1px 13px 0 11px;
    border: 1px solid #7f9bcb;
    border-bottom: none;
    font-size: 12px;
}
.switch .on {
    padding: 1px 13px 0 10px;
    background: #ffe08a;
    border-right: none;
    font: bold 11px/16px "Liberation Sans", sans-serif;
}
.money {
    display: flex;
    align-items: center;
    gap: 7px;
    margin: 0 0 6px auto;
}
#cur {
    margin-left: 5px;
}
.entries {
    position: relative;
    flex: none;
    border: 1px solid #7f9bcb;
    border-width: 0 1px;
}
#entries th:nth-child(3), #entries td:nth-child(3) {
    border-right: 1px solid #777;
}
#entries tfoot td {
    height: 18px;
    line-height: 15px;
    border: 1px solid #7f9bcb;
    border-left: none;
    background: #efefef;
    padding-left: 4px;
}
#entries tfoot .sum {
    background: #d8d8d8;
}
.entries .scroll {
    height: 19px;
    border-top: none;
}
.entries .thumb {
    width: 176px;
    margin-right: auto;
}
/* black frame over the amount and order columns */
.mark {
    position: absolute;
    left: 379px;
    top: -12px;
    width: 270px;
    height: 65px;
    border: 5px solid #000;
}

/* taskbar */
.taskbar {
    flex: none;
    display: flex;
    align-items: center;
    height: 39px;
    border-top: 1px solid #17344f;
    background: linear-gradient(90deg, #1c6ca5, #2e87bd 176px, #82add9 182px, #7aa2d1 calc(100% - 306px), #1c60a8 calc(100% - 300px), #164982 calc(100% - 220px), #204b79);
}
.taskbar button {
    width: 62px;
    height: 38px;
    padding-right: 2px;
    flex: none;
}
.taskbar button:first-child {
    width: 58px;
}
.taskbar svg {
    width: 30px;
    height: 30px;
    display: block;
    margin: 0 auto;
}
.taskbar .orb {
    width: 36px;
    height: 36px;
}
.taskbar .small {
    width: 26px;
    height: 26px;
}
.taskbar .open {
    width: 58px;
    margin: 0 2px;
    padding: 0;
    border: 1px solid #2a4d78;
    border-radius: 3px;
    background: linear-gradient(#c0d6ec, #8fb2d8);
    box-shadow: inset 0 0 0 1px #d4e4f4;
}
.taskbar .active {
    background: linear-gradient(#eff5fa, #c9dcef);
}
.tray {
    position: relative;
    margin-left: auto;
    display: flex;
    align-items: center;
    height: 38px;
    gap: 10px;
    padding-right: 2px;
    color: #fff;
    font-size: 12px;
}
.taskbar .tray .i16 {
    width: 16px;
    height: 14px;
    margin: 0;
}
.up {
    margin: 0 6px;
    border: 4px solid transparent;
    border-bottom-color: #fff;
    border-top: none;
}
.clock {
    width: 80px;
    margin-left: 16px;
    text-align: center;
    line-height: 17px;
}
.peek {
    width: 12px;
    height: 38px;
    margin-left: -8px;
    border: 1px solid #7f9cbd;
    background: #34547b;
}
/* watermark over the clock */
.forum {
    position: absolute;
    right: 10px;
    bottom: 6px;
    display: flex;
    align-items: center;
    gap: 3px;
    font: bold 16px/20px "Noto Sans", sans-serif;
}
.taskbar .forum svg {
    width: 18px;
    height: 18px;
}
```
